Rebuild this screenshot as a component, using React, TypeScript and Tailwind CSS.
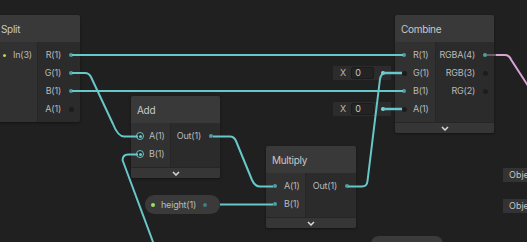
import React from "react";

type PortKind = "on" | "off" | "ring" | "vec";
type Row = { label: string; port: PortKind };

function Port({ kind }: { kind: PortKind }) {
  return (
    <span className="flex h-[8px] w-[8px] shrink-0 items-center justify-center">
      {kind === "ring" ? (
        <span className="flex h-[8px] w-[8px] items-center justify-center rounded-full border-[1.5px] border-[#67c7c9] bg-[#1e2a2a]">
          <span className="h-[3px] w-[3px] rounded-full bg-[#67c7c9]" />
        </span>
      ) : kind === "off" ? (
        <span className="h-[5px] w-[5px] rounded-full bg-[#1d1d1d]" />
      ) : kind === "vec" ? (
        <span className="h-[3px] w-[3px] rounded-full bg-[#c5cf5c]" />
      ) : (
        <span className="h-[4px] w-[4px] rounded-full bg-[#4f9ea0]" />
      )}
    </span>
  );
}

function Node({
  title,
  pos,
  inW,
  inputs,
  outputs,
  footer = true,
}: {
  title: string;
  pos: string;
  inW: string;
  inputs: Row[];
  outputs: Row[];
  footer?: boolean;
}) {
  return (
    <div className={`absolute ${pos} flex flex-col overflow-hidden rounded-[2px] bg-[#2b2b2b] shadow-[0_1px_3px_rgba(0,0,0,0.4)]`}>
      <div className="flex h-[27px] items-center bg-[#393939] px-[6px] pt-[1px] text-[10px] tracking-[-0.3px] text-[#c8c8c8]">
        {title}
      </div>
      <div className="flex">
        <div className={`${inW} flex shrink-0 flex-col border-r border-[#262626] bg-[#313131] py-[4px]`}>
          {inputs.map((r) => (
            <div key={r.label} className="flex h-[18px] items-center gap-[5px] pl-[5px] text-[9px] tracking-[-0.2px] text-[#bababa]">
              <Port kind={r.port} />
              <span>{r.label}</span>
            </div>
          ))}
        </div>
        <div className="flex flex-1 flex-col py-[4px]">
          {outputs.map((r) => (
            <div key={r.label} className="flex h-[18px] items-center justify-end gap-[6px] pr-[5px] text-[9px] tracking-[-0.2px] text-[#bababa]">
              <span>{r.label}</span>
              <Port kind={r.port} />
            </div>
          ))}
        </div>
      </div>
      {footer && (
        <div className="flex h-[11px] items-center justify-center border-t border-[#262626] bg-[#363636]">
          <svg width="8" height="5" viewBox="0 0 8 5">
            <path d="M1 1 L4 4 L7 1" fill="none" stroke="#d8d8d8" strokeWidth="1.5" />
          </svg>
        </div>
      )}
    </div>
  );
}

function Field({ pos }: { pos: string }) {
  return (
    <div className={`absolute ${pos} flex h-[14px] w-[58px] items-center bg-[#2c2c2c] pl-[7px] text-[9px] text-[#b8b8b8]`}>
      <span>X</span>
      <span className="ml-[5px] flex h-[12px] w-[23px] items-center rounded-[2px] border border-[#1b1b1b] bg-[#232323] pl-[3px] text-[#c8c8c8]">
        0
      </span>
      <span className="ml-auto mr-[6px] h-[4px] w-[4px] rounded-full bg-[#80dcdd]" />
    </div>
  );
}

export default function App() {
  const teal = "#67c7c9";
  return (
    <div
      className="relative h-[242px] w-[527px] overflow-hidden bg-[#202020]"
      style={{ fontFamily: "Inter, 'Noto Sans', sans-serif" }}
    >
      <Node
        title="Split"
        pos="left-[-5px] top-[15px] w-[85px]"
        inW="w-[43px]"
        footer={false}
        inputs={[{ label: "In(3)", port: "vec" }]}
        outputs={[
          { label: "R(1)", port: "on" },
          { label: "G(1)", port: "on" },
          { label: "B(1)", port: "on" },
          { label: "A(1)", port: "off" },
        ]}
      />
      <Node
        title="Add"
        pos="left-[131px] top-[96px] w-[89px]"
        inW="w-[40px]"
        inputs={[
          { label: "A(1)", port: "ring" },
          { label: "B(1)", port: "ring" },
        ]}
        outputs={[{ label: "Out(1)", port: "on" }]}
      />
      <Node
        title="Multiply"
        pos="left-[266px] top-[146px] w-[90px]"
        inW="w-[40px]"
        inputs={[
          { label: "A(1)", port: "on" },
          { label: "B(1)", port: "on" },
        ]}
        outputs={[{ label: "Out(1)", port: "on" }]}
      />
      <Node
        title="Combine"
        pos="left-[395px] top-[15px] w-[99px]"
        inW="w-[41px]"
        inputs={[
          { label: "R(1)", port: "on" },
          { label: "G(1)", port: "off" },
          { label: "B(1)", port: "on" },
          { label: "A(1)", port: "off" },
        ]}
        outputs={[
          { label: "RGBA(4)", port: "on" },
          { label: "RGB(3)", port: "off" },
          { label: "RG(2)", port: "off" },
        ]}
      />

      <Field pos="left-[333px] top-[66px]" />
      <Field pos="left-[333px] top-[102px]" />

      {/* property node */}
      <div className="absolute left-[145px] top-[195px] flex h-[19px] w-[75px] items-center rounded-full bg-[#3a3a3a] pl-[6px] text-[9px] tracking-[-0.2px] text-[#bcbcbc]">
        <span className="h-[4px] w-[4px] rounded-full bg-[#9be05a]" />
        <span className="ml-[6px]">height(1)</span>
        <span className="ml-auto mr-[13px] h-[4px] w-[4px] rounded-full bg-[#3f7f80]" />
      </div>

      <div className="absolute left-[503px] top-[168px] flex h-[14px] items-center bg-[#333333] px-[6px] text-[9px] text-[#c4c4c4]">
        Object
      </div>
      <div className="absolute left-[503px] top-[199px] flex h-[14px] items-center bg-[#333333] px-[6px] text-[9px] text-[#c4c4c4]">
        Object
      </div>
      <div className="absolute left-[371px] top-[236px] h-[20px] w-[72px] rounded-[8px] bg-[#3b3b3b]" />

      <svg className="pointer-events-none absolute inset-0" width="527" height="242">
        <g fill="none" stroke={teal} strokeWidth="2" strokeLinejoin="round">
          <path d="M72 55 H403" />
          <path d="M72 91 H403" />
          <path d="M72 73 H85 Q89 73 91 77 L113 124 Q118 136.5 124 136.5 H138" />
          <path d="M213 136.5 H230 Q234 136.5 236 141 L252 180 Q255 186.5 260 186.5 H273" />
          <path d="M220 204.5 H273" />
          <path d="M348 186.5 H362 Q367 186.5 367.5 181 L380 79 Q381 73 386 73" />
          <path d="M383 73 H402" strokeWidth="2.5" />
          <path d="M383 109 H402" strokeWidth="2.5" />
          <path d="M138 154.5 H128 Q123 154.5 122.5 160 L156 250" />
        </g>
        <path d="M487 55 H505 Q509 55 511 59.5 L532 92" fill="none" stroke="#d9a3d3" strokeWidth="2" />
        <path d="M487 55 H496" fill="none" stroke="#6e5c6b" strokeWidth="2" />
      </svg>
    </div>
  );
}
